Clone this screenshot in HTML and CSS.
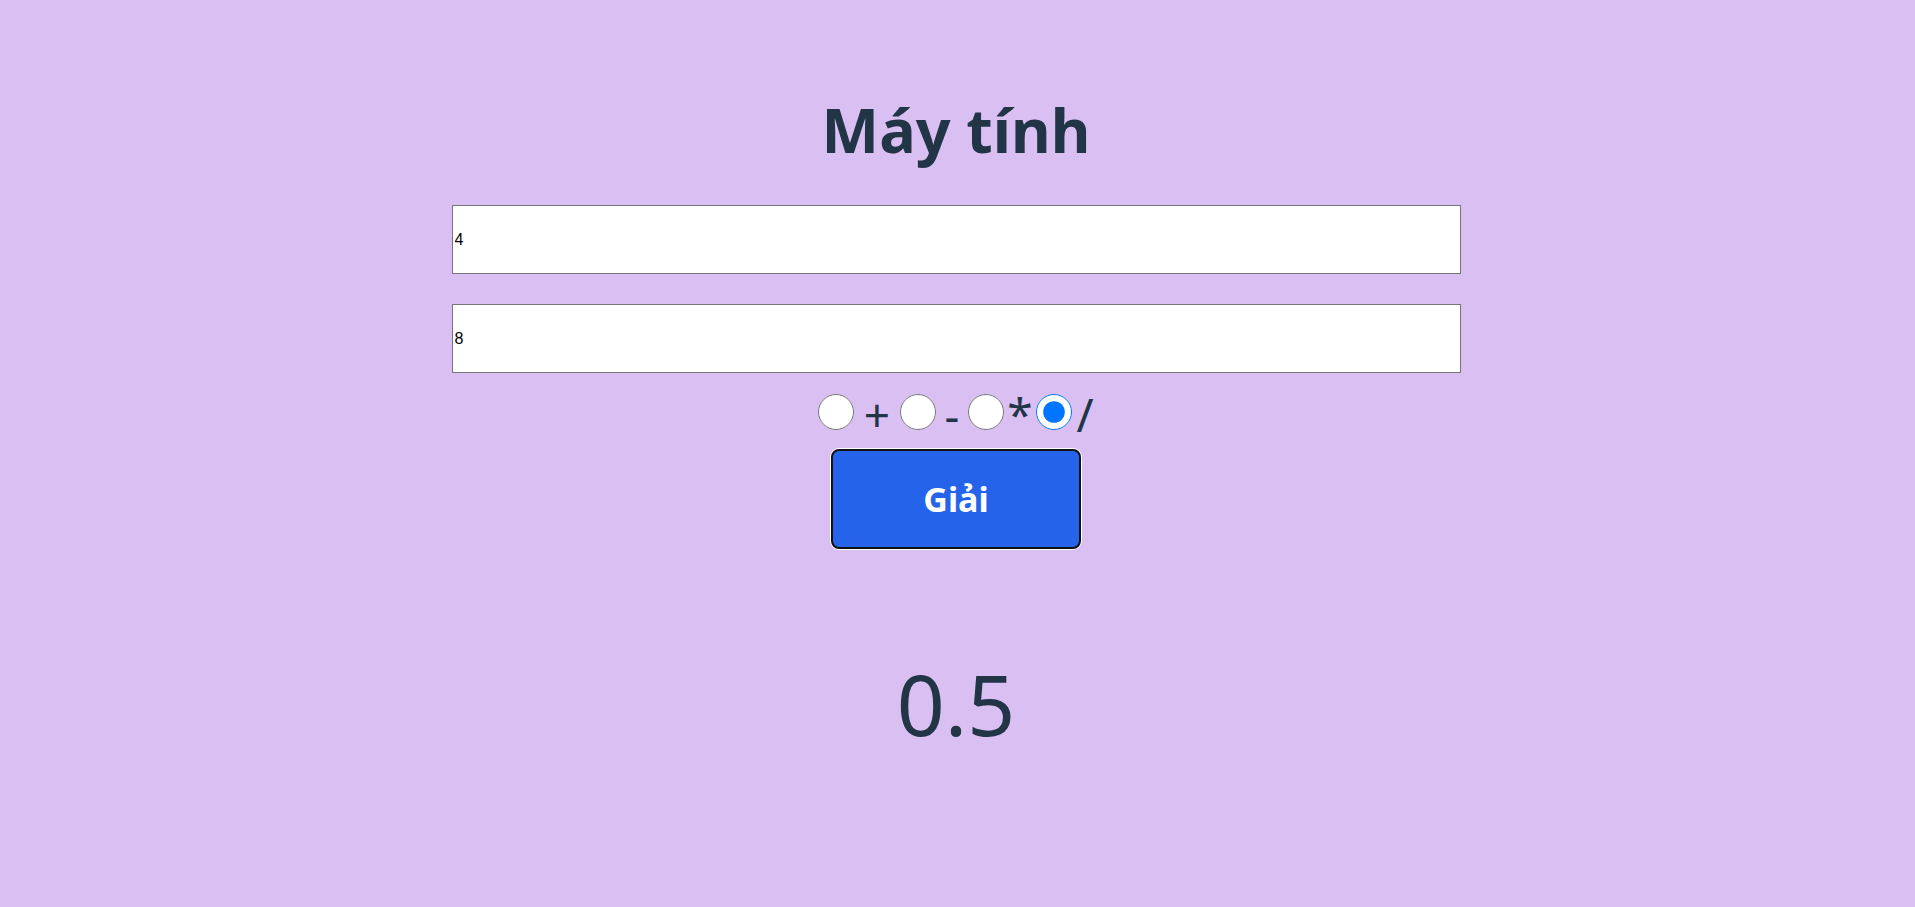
FILE: index.html
```html
<!DOCTYPE html>
<html lang="vi">
<head>
<meta charset="utf-8">
<title>Máy tính</title>
<link rel="stylesheet" href="styles.css">
</head>
<body>
<main class="calc">
  <h1 class="title">Máy tính</h1>
  <input class="num num-first" type="text" value="4">
  <input class="num num-second" type="text" value="8">
  <div class="ops">
    <input class="op" type="radio" name="op" id="add"><label class="op-label op-add" for="add">+</label>
    <input class="op" type="radio" name="op" id="sub"><label class="op-label op-sub" for="sub">-</label>
    <input class="op" type="radio" name="op" id="mul"><label class="op-label op-mul" for="mul">*</label>
    <input class="op" type="radio" name="op" id="div" checked><label class="op-label op-div" for="div">/</label>
  </div>
  <button class="solve" type="button">Giải</button>
  <div class="result">0.5</div>
</main>
</body>
</html>
```
FILE: styles.css
```css
html, body {
  margin: 0;
  padding: 0;
}
body {
  background: #dac0f2;
  color: #213547;
  font-family: "Noto Sans", "Open Sans", sans-serif;
  min-height: 907px;
}
.calc {
  display: flex;
  flex-direction: column;
  align-items: center;
  padding: 96px 3px 0 0;
}
.title {
  margin: 0 0 42px;
  font-size: 61px;
  line-height: 1.1;
  font-weight: 700;
  color: #213547;
}
.num {
  box-sizing: border-box;
  width: 1009px;
  height: 69px;
  margin: 0;
  padding: 0 2px;
  border: 1px solid #767676;
  background: #fff;
  font-family: "Liberation Sans", Arial, sans-serif;
  font-size: 16px;
  color: #000;
  outline: none;
}
.num-first {
  margin-bottom: 30px;
}
.ops {
  display: flex;
  align-items: center;
  margin-top: 19px;
  height: 40px;
  padding-left: 4px;
}
.op {
  width: 36px;
  height: 36px;
  margin: 0;
  accent-color: #0075ff;
}
.op-label {
  display: block;
  font-size: 46px;
  line-height: 46px;
  padding-top: 4px;
  text-align: center;
  color: #213547;
}
.op-add {
  width: 46px;
}
.op-sub,
.op-mul {
  width: 32px;
}
.op-div {
  width: 26px;
}
.solve {
  box-sizing: border-box;
  margin-top: 17px;
  width: 250px;
  height: 100px;
  background: #2563eb;
  color: #fff;
  border: 2px solid #111;
  border-radius: 8px;
  box-shadow: 0 0 0 1px #fff;
  font-family: "Noto Sans", "Open Sans", sans-serif;
  font-size: 34px;
  font-weight: 700;
}
.result {
  margin-top: 105px;
  font-size: 84px;
  line-height: 1.2;
  color: #213547;
}
```
